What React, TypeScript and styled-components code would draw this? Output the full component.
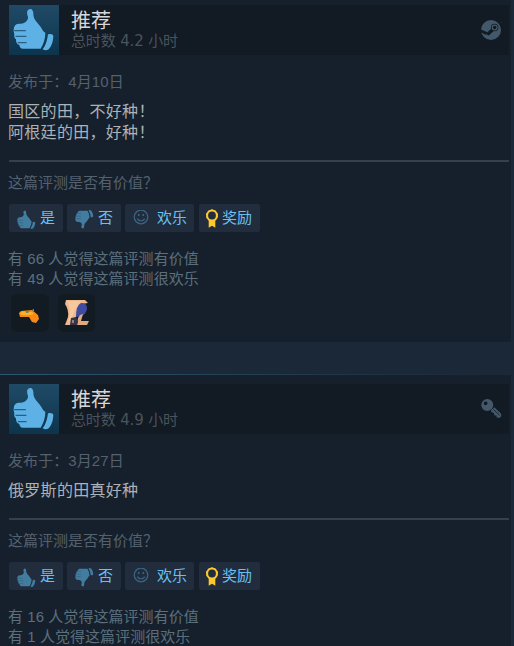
import React from "react";
import styled, { createGlobalStyle } from "styled-components";

const GlobalStyle = createGlobalStyle`
  * { box-sizing: border-box; }
  body { margin: 0; background: #1b2838; overflow: hidden; }
`;

const Page = styled.main`
  width: 514px;
  height: 646px;
  overflow: hidden;
  padding-right: 3px;
  background: #1b2838;
  font-family: "Liberation Sans", "Noto Sans CJK SC", sans-serif;
  font-weight: 400;
  font-size: 15px;
  line-height: 20px;
  color: #56707f;
`;

const Card = styled.article<{ $first?: boolean }>`
  height: ${(p) => (p.$first ? 342 : 300)}px;
  margin-top: ${(p) => (p.$first ? 0 : 32)}px;
  padding: ${(p) => (p.$first ? 5 : 9)}px 2px 0 9px;
  background: #16202c;
  ${(p) => !p.$first && "border-top: 1px solid; border-image: linear-gradient(90deg, #2b5870, #1b2838 95%) 1;"}
`;

const Header = styled.header`
  display: flex;
  height: 50px;
  background: #121a23;
`;

const Tile = styled.div`
  width: 50px;
  height: 50px;
  background: linear-gradient(#1f4a66, #0d344d);
`;

const Heading = styled.div`
  flex: 1;
  padding: 5px 0 0 12px;
`;

const Title = styled.div`
  font-size: 20px;
  line-height: 23px;
  color: #d6d7d8;
`;

const Hours = styled.div`
  font-family: "DejaVu Sans", "Noto Sans CJK SC", sans-serif;
  line-height: 17px;
  letter-spacing: -0.15px;
  color: #4a535c;
`;

const Source = styled.div`
  padding: 15px 7px 0 0;
`;

const Posted = styled.div`
  margin: 17px 0 0 -1px;
  letter-spacing: 0.08px;
  color: #54616f;
`;

const Body = styled.div`
  margin: 9px 0 0 -1px;
  font-size: 16px;
  line-height: 21px;
  letter-spacing: 0.3px;
  color: #acb2b8;
  white-space: pre-line;
`;

const Divider = styled.hr`
  height: 2px;
  margin: 17px 0 0;
  border: 0;
  background: #363f4b;
`;

const Question = styled.div`
  margin: 11px 0 11px -1px;
  color: #54616f;
`;

const Actions = styled.div`
  display: flex;
  height: 28px;
`;

const Button = styled.button<{ $width: number; $gap: number; $after?: number; $left?: number }>`
  display: flex;
  align-items: center;
  gap: ${(p) => p.$gap}px;
  width: ${(p) => p.$width}px;
  height: 28px;
  margin: 0 ${(p) => p.$after ?? 4}px 0 0;
  padding: 0 0 0 ${(p) => p.$left ?? 8}px;
  border: 0;
  border-radius: 2px;
  background: #212c3d;
  color: #67c1f5;
  font: inherit;
  white-space: nowrap;
`;

const Stats = styled.div`
  margin: 17px 0 0 -1px;
  letter-spacing: 0.05px;
  color: #5b6f7c;
`;

const Awards = styled.div`
  display: flex;
  gap: 9px;
  margin: 5px 0 0 2px;
`;

const Award = styled.div<{ $width: number }>`
  display: grid;
  place-items: center;
  width: ${(p) => p.$width}px;
  height: 38px;
  border-radius: 6px;
  background: #121a22;
`;

const Icon = styled.svg`
  display: block;
  flex: none;
`;

const SmallIcon = styled(Icon)`
  margin-top: 2px;
`;

const ThumbShape = ({ color, gap }: { color: string; gap: string }) => (
  <>
    <path fill={color} d="M64 12C70 12 72 17 73 25C73 37 76 43 83 51C91 60 97 67 101 76Q104 82 109 83Q109 108 95 131H42Q32 131 31 120Q20 117 21 103Q14 99 16 88Q12 79 15 67Q18 57 30 56Q40 57 46 53C53 49 58 43 57 35C53 26 52 13 64 12Z" />
    <path fill={color} d="M117 88Q133 84 133 95Q131 120 119 133Q110 139 101 133Q102 130 106 125Q114 112 117 88Z" />
    <path stroke={gap} strokeWidth="4" strokeLinecap="round" fill="none" d="M17 77H49M21 94H51M28 113H51" />
  </>
);

const BigThumb = () => (
  <Icon width="50" height="50" viewBox="0 0 150 150">
    <ThumbShape color="#5eb1e5" gap="#285f82" />
  </Icon>
);

const ThumbUp = () => (
  <SmallIcon width="19" height="19" viewBox="12 8 126 128" preserveAspectRatio="none">
    <ThumbShape color="#427c9f" gap="#32607c" />
  </SmallIcon>
);

const ThumbDown = () => (
  <SmallIcon width="19" height="19" viewBox="12 8 126 128" preserveAspectRatio="none">
    <g transform="translate(0 144) scale(1 -1)">
      <ThumbShape color="#427c9f" gap="#32607c" />
    </g>
  </SmallIcon>
);

const SteamIcon = () => (
  <Icon width="21" height="21" viewBox="0 0 21 21">
    <circle cx="10" cy="10" r="10" fill="#43586a" />
    <path d="M-1 10.6L5.8 13.6" stroke="#121a22" strokeWidth="2.8" />
    <path d="M7.5 13.6L13.5 8" stroke="#121a22" strokeWidth="3.4" strokeLinecap="round" />
    <circle cx="13.6" cy="7.5" r="3.8" fill="#121a22" />
    <circle cx="13.6" cy="7.5" r="2.4" fill="none" stroke="#43586a" strokeWidth="1.3" />
    <circle cx="20.3" cy="2.6" r=".7" fill="#263643" />
  </Icon>
);

const KeyIcon = () => (
  <Icon width="21" height="21" viewBox="0 0 21 21">
    <path fill="#43586a" fillRule="evenodd" d="M6.3 0A6 6 0 1 1 6.2 12A6 6 0 0 1 6.3 0ZM4.6 2.4A1.9 1.9 0 1 0 4.7 6.2A1.9 1.9 0 0 0 4.6 2.4Z" />
    <path fill="#43586a" d="M13.2 8.2L20.2 14.8V17.4L18.1 19L15.7 18.5L15.4 16.5L13.1 16.3V14.2L10.3 12.9L10 11.3Z" />
    <path d="M12.3 10.4L18.6 16.4" stroke="#17212b" strokeWidth=".9" />
  </Icon>
);

const Smile = () => (
  <Icon width="16" height="16" viewBox="0 0 16 16" fill="none" stroke="#396580" strokeWidth="1.3">
    <circle cx="8" cy="7" r="6.8" />
    <path d="M4.2 8.7Q8 13 11.8 8.7" />
    <path d="M5.7 3.9V6.1M10.3 3.9V6.1" strokeWidth="1.6" />
  </Icon>
);

const Ribbon = () => (
  <Icon width="14" height="19" viewBox="0 0 14 19">
    <path fill="#ffc82c" d="M3.7 11H10.3V18.8L7 16.8L3.7 18.8Z" />
    <circle cx="7" cy="6.5" r="4.9" fill="#212c3d" stroke="#ffc82c" strokeWidth="2" />
    <circle cx="7" cy="6.5" r="5.6" fill="none" stroke="#ffc82c" strokeWidth="1" strokeDasharray="2.2 1.3" />
  </Icon>
);

const Blaster = () => (
  <Icon width="24" height="24" viewBox="0 0 24 24">
    <path fill="#f58b16" d="M1 12L3 10L14 9L20 14L21 18L18 22L14 21L11 16L2 16Z" />
    <path fill="#ffb02b" d="M2 12L6 10L14 11L16 13L12 14L3 14Z" />
    <path fill="#788765" d="M7 10H12L10 12H8ZM15 8H16V11L14 10Z" />
  </Icon>
);

const Figure = () => (
  <Icon width="24" height="26" viewBox="0 0 24 26">
    <path fill="#edb98c" d="M1 0H20L23 3L17 4L13 11L10 19L5 25H0L3 17Q4 10 0 4Z" />
    <path fill="#f6c89d" d="M2 1H16L10 10L7 18L3 23Q7 10 2 1Z" />
    <path fill="#3f4ba0" d="M16 3Q22 2 22 9Q21 14 17 16L11 17Q11 5 16 3Z" />
    <path fill="#dfaa80" d="M15 15L18 14L16 21H24L22 25H12L13 18Z" />
    <path fill="#383347" d="M6 18L11 17L13 22L12 25H5Z" />
    <path fill="#8d8090" d="M7 20H9V23H7Z" />
  </Icon>
);

type ReviewProps = {
  first?: boolean;
  hours: string;
  date: string;
  text: string;
  helpful: number;
  funny: number;
  source: React.ReactNode;
  awards?: React.ReactNode;
};

function Review({ first, hours, date, text, helpful, funny, source, awards }: ReviewProps) {
  return (
    <Card $first={first}>
      <Header>
        <Tile><BigThumb /></Tile>
        <Heading>
          <Title>推荐</Title>
          <Hours>总时数 {hours} 小时</Hours>
        </Heading>
        <Source>{source}</Source>
      </Header>
      <Posted>发布于：{date}</Posted>
      <Body>{text}</Body>
      <Divider />
      <Question>这篇评测是否有价值？</Question>
      <Actions>
        <Button $width={54} $gap={4}><ThumbUp />是</Button>
        <Button $width={54} $gap={4}><ThumbDown />否</Button>
        <Button $width={69} $gap={8} $after={5}><Smile />欢乐</Button>
        <Button $width={61} $gap={3} $left={6}><Ribbon />奖励</Button>
      </Actions>
      <Stats>
        <div>有 {helpful} 人觉得这篇评测有价值</div>
        <div>有 {funny} 人觉得这篇评测很欢乐</div>
      </Stats>
      {awards}
    </Card>
  );
}

export default function App() {
  return (
    <>
      <GlobalStyle />
      <Page>
        <Review
          first
          hours="4.2"
          date="4月10日"
          text={"国区的田，不好种！\n阿根廷的田，好种！"}
          helpful={66}
          funny={49}
          source={<SteamIcon />}
          awards={
            <Awards>
              <Award $width={38}><Blaster /></Award>
              <Award $width={37}><Figure /></Award>
            </Awards>
          }
        />
        <Review hours="4.9" date="3月27日" text="俄罗斯的田真好种" helpful={16} funny={1} source={<KeyIcon />} />
      </Page>
    </>
  );
}
